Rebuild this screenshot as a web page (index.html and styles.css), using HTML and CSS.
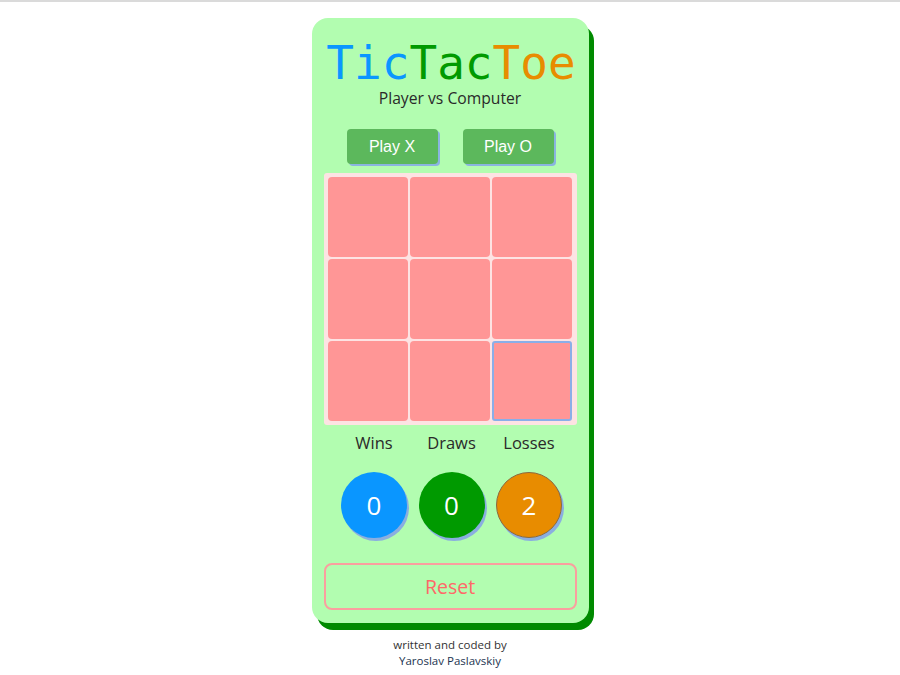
FILE: index.html
```html
<!DOCTYPE html>
<html lang="en">
<head>
<meta charset="utf-8">
<title>TicTacToe</title>
<link rel="stylesheet" href="styles.css">
</head>
<body>
<div class="topline"></div>
<main class="card">
  <h1 class="title"><span class="t-blue">Tic</span><span class="t-green">Tac</span><span class="t-orange">Toe</span></h1>
  <p class="subtitle">Player vs Computer</p>
  <div class="choose">
    <button class="play">Play X</button>
    <button class="play">Play O</button>
  </div>
  <div class="board">
    <button class="cell"></button>
    <button class="cell"></button>
    <button class="cell"></button>
    <button class="cell"></button>
    <button class="cell"></button>
    <button class="cell"></button>
    <button class="cell"></button>
    <button class="cell"></button>
    <button class="cell focused"></button>
  </div>
  <div class="stats">
    <div class="label">Wins</div>
    <div class="label">Draws</div>
    <div class="label">Losses</div>
    <div class="count c-blue">0</div>
    <div class="count c-green">0</div>
    <div class="count c-orange">2</div>
  </div>
  <button class="reset">Reset</button>
</main>
<footer class="footer">
  <div class="f1">written and coded by</div>
  <div class="f2">Yaroslav Paslavskiy</div>
</footer>
</body>
</html>
```

FILE: styles.css
```css
html, body {
  margin: 0;
  padding: 0;
  background: #ffffff;
}
body {
  font-family: "Open Sans", "Noto Sans", sans-serif;
  color: #2b2b2b;
}
.topline {
  height: 2px;
  background: #dadada;
}
.card {
  width: 277px;
  box-sizing: border-box;
  margin: 16px auto 0;
  padding: 22px 12px 13px;
  background: #b2fdb0;
  border-radius: 16px;
  box-shadow: 5px 7px 0 #008a00;
  display: flex;
  flex-direction: column;
  align-items: center;
}
.title {
  margin: 0 0 2px 2px;
  font-family: "DejaVu Sans Mono", monospace;
  font-weight: normal;
  font-size: 46px;
  line-height: 46px;
  letter-spacing: 0;
}
.t-blue { color: #0a96ff; }
.t-green { color: #009a00; }
.t-orange { color: #e88c00; }
.subtitle {
  margin: 0;
  font-size: 15.7px;
  line-height: 20px;
  color: #2a2a2a;
}
.choose {
  display: flex;
  gap: 25px;
  margin-top: 21px;
}
.play {
  width: 91px;
  height: 35px;
  border: none;
  border-radius: 4px;
  background: #5cb85c;
  color: #ffffff;
  font-family: "Liberation Sans", Arial, sans-serif;
  font-size: 16px;
  box-shadow: 2px 2px 0 #8ab4e0;
  padding: 0;
}
.board {
  margin-top: 9px;
  width: 253px;
  box-sizing: border-box;
  padding: 4px;
  background: #fde3e3;
  border-radius: 3px;
  display: grid;
  grid-template-columns: repeat(3, 80px);
  grid-auto-rows: 80px;
  gap: 2px;
  justify-content: center;
}
.cell {
  background: #ff9696;
  border: none;
  border-radius: 4px;
  padding: 0;
}
.cell.focused {
  border: 2px solid #8aaee8;
  border-radius: 3px;
}
.stats {
  margin-top: 7px;
  padding-left: 3px;
  display: grid;
  grid-template-columns: repeat(3, 77.5px);
  justify-items: center;
  align-items: center;
  row-gap: 18px;
}
.label {
  font-size: 16.5px;
  line-height: 22px;
  color: #2a2a2a;
}
.count {
  width: 66px;
  height: 66px;
  border-radius: 50%;
  display: flex;
  align-items: center;
  justify-content: center;
  color: #ffffff;
  font-size: 26px;
  box-shadow: 2px 3px 0 #8aaee0;
  box-sizing: border-box;
}
.c-blue { background: #0a96ff; }
.c-green { background: #009a00; }
.c-orange { background: #e88c00; border: 1px solid #8a6a40; }
.reset {
  margin-top: 25px;
  width: 253px;
  height: 47px;
  box-sizing: border-box;
  background: transparent;
  border: 2px solid #fa9f9f;
  border-radius: 8px;
  color: #ff6868;
  font-family: "Open Sans", "Noto Sans", sans-serif;
  font-size: 19.5px;
  padding: 0;
}
.footer {
  margin-top: 14px;
  text-align: center;
  font-size: 11.5px;
  line-height: 16px;
}
.f1 { color: #333333; }
.f2 { color: #1c3450; }
```
